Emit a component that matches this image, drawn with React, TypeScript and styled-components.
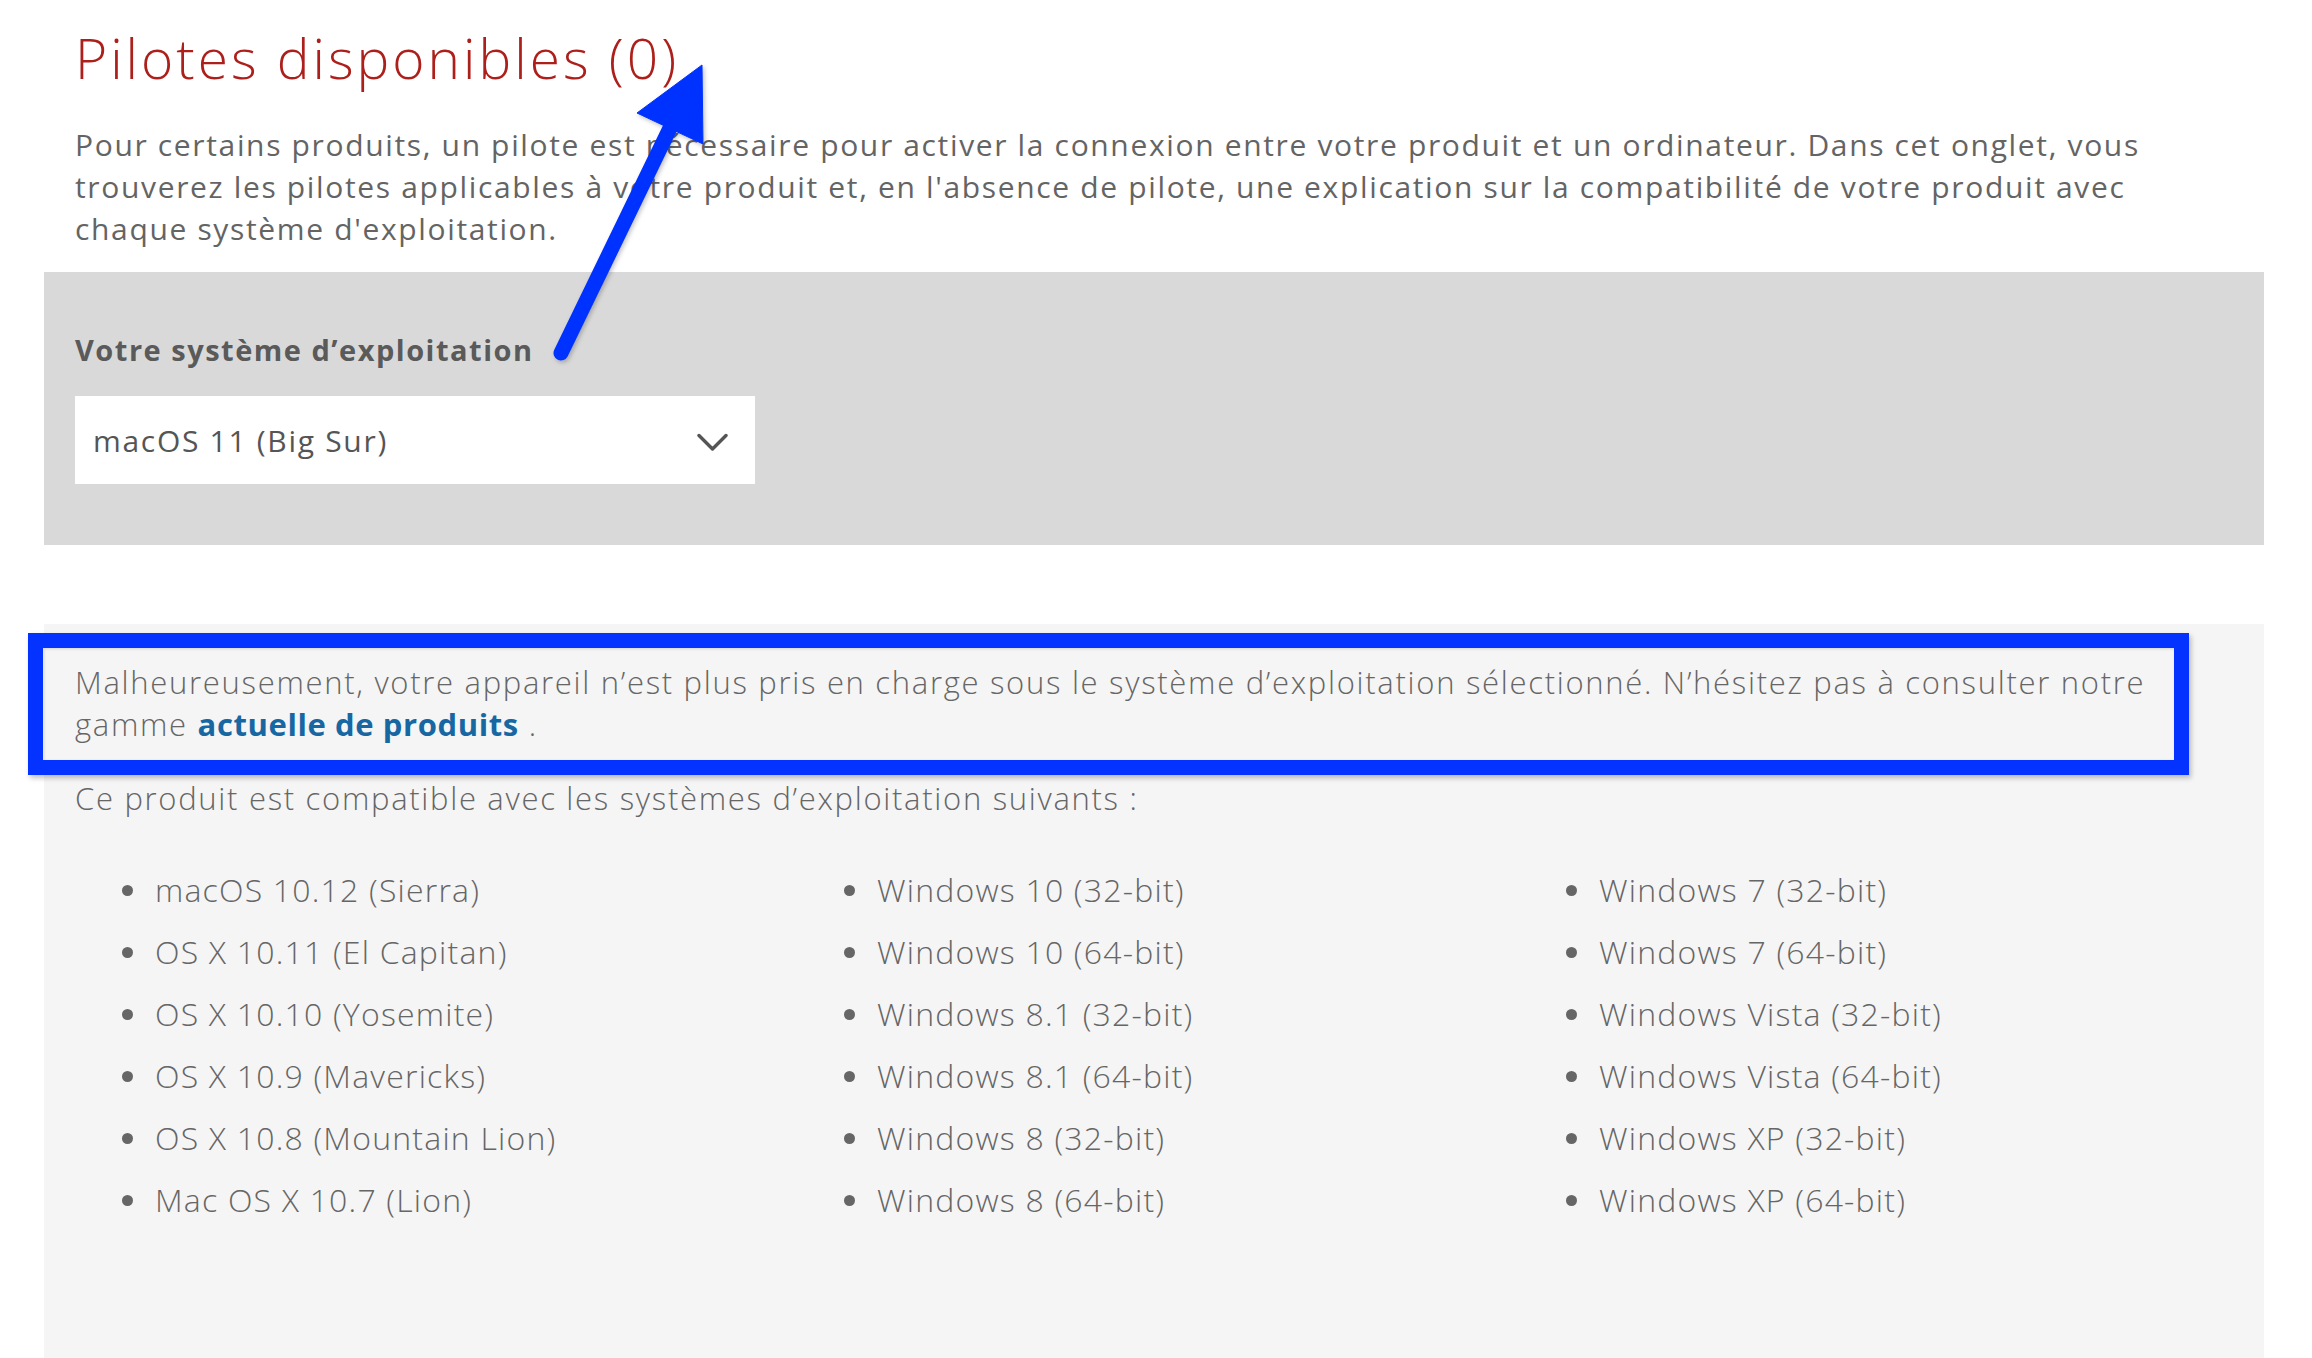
import React from "react";
import styled, { createGlobalStyle } from "styled-components";

const GlobalStyle = createGlobalStyle`
  html, body, #root {
    margin: 0;
    padding: 0;
    height: 100%;
    background: #ffffff;
  }
  body {
    font-family: "Open Sans", "Liberation Sans", sans-serif;
    color: #666666;
  }
  * { box-sizing: border-box; }
`;

const Page = styled.div`
  position: relative;
  min-height: 100%;
  display: flex;
  flex-direction: column;
  padding: 27px 48px 0 44px;
`;

const Intro = styled.header`
  padding: 0 31px;
`;

const Title = styled.h1`
  margin: 0;
  font-size: 55px;
  line-height: 62px;
  font-weight: 300;
  color: #ad1f1b;
  letter-spacing: 3px;
  white-space: nowrap;
`;

const Lead = styled.p`
  margin: 35px 0 0;
  font-size: 30px;
  line-height: 42px;
  color: #646464;
  white-space: nowrap;
  letter-spacing: 1.65px;
`;

const OsPanel = styled.section`
  margin-top: 22px;
  background: #d9d9d9;
  padding: 57px 31px 61px;
`;

const FieldLabel = styled.label`
  display: block;
  font-size: 29px;
  line-height: 42px;
  font-weight: 700;
  color: #5a5a5a;
  letter-spacing: 1.5px;
`;

const SelectBox = styled.div`
  margin-top: 25px;
  width: 680px;
  height: 88px;
  background: #ffffff;
  display: flex;
  align-items: center;
  justify-content: space-between;
  padding: 0 27px 0 18px;
  font-size: 30px;
  color: #555555;
  letter-spacing: 1.7px;
`;

const Chevron = styled.svg`
  width: 31px;
  height: 19px;
  margin-top: 4px;
`;

const Support = styled.section`
  position: relative;
  flex: 1;
  margin-top: 79px;
  background: #f5f5f5;
  padding: 37px 31px 60px;
`;

const Notice = styled.p`
  margin: 0;
  font-size: 31px;
  line-height: 42px;
  font-weight: 300;
  color: #666666;
  white-space: nowrap;
  letter-spacing: 1.7px;
`;

const ProductLink = styled.a`
  color: #1767a3;
  font-weight: 700;
  text-decoration: none;
  letter-spacing: 0.6px;
`;

const Compat = styled.p`
  margin: 32px 0 0;
  font-size: 31px;
  line-height: 42px;
  font-weight: 300;
  color: #666666;
  letter-spacing: 1.7px;
  white-space: nowrap;
`;

const Columns = styled.div`
  margin-top: 50px;
  display: grid;
  grid-template-columns: repeat(3, 722px);
`;

const OsList = styled.ul`
  list-style: none;
  margin: 0;
  padding: 0;
  display: flex;
  flex-direction: column;
  gap: 20px;
`;

const OsItem = styled.li`
  position: relative;
  padding-left: 80px;
  font-size: 32px;
  line-height: 42px;
  font-weight: 300;
  color: #666666;
  letter-spacing: 1.2px;
  white-space: nowrap;

  &::before {
    content: "";
    position: absolute;
    left: 47px;
    top: 16px;
    width: 11px;
    height: 11px;
    border-radius: 50%;
    background: #666666;
  }
`;

const Highlight = styled.div`
  position: absolute;
  left: -16px;
  top: 9px;
  width: 2161px;
  height: 142px;
  border: 15px solid #0433ff;
  box-shadow: 2px 3px 5px rgba(0, 0, 0, 0.25), inset 1px 1px 3px rgba(0, 0, 0, 0.15);
  pointer-events: none;
`;

const ArrowLayer = styled.svg`
  position: absolute;
  left: 0;
  top: 0;
  width: 900px;
  height: 420px;
  pointer-events: none;
  overflow: visible;
`;

const macs = [
  "macOS 10.12 (Sierra)",
  "OS X 10.11 (El Capitan)",
  "OS X 10.10 (Yosemite)",
  "OS X 10.9 (Mavericks)",
  "OS X 10.8 (Mountain Lion)",
  "Mac OS X 10.7 (Lion)",
];
const win10 = [
  "Windows 10 (32-bit)",
  "Windows 10 (64-bit)",
  "Windows 8.1 (32-bit)",
  "Windows 8.1 (64-bit)",
  "Windows 8 (32-bit)",
  "Windows 8 (64-bit)",
];
const winOld = [
  "Windows 7 (32-bit)",
  "Windows 7 (64-bit)",
  "Windows Vista (32-bit)",
  "Windows Vista (64-bit)",
  "Windows XP (32-bit)",
  "Windows XP (64-bit)",
];

export default function App() {
  return (
    <>
      <GlobalStyle />
      <Page>
        <Intro>
          <Title>Pilotes disponibles (0)</Title>
          <Lead>
            Pour certains produits, un pilote est nécessaire pour activer la connexion entre votre produit et un ordinateur. Dans cet onglet, vous
            <br />
            trouverez les pilotes applicables à votre produit et, en l'absence de pilote, une explication sur la compatibilité de votre produit avec
            <br />
            chaque système d'exploitation.
          </Lead>
        </Intro>

        <OsPanel>
          <FieldLabel>Votre système d’exploitation</FieldLabel>
          <SelectBox>
            <span>macOS 11 (Big Sur)</span>
            <Chevron viewBox="0 0 31 19" fill="none">
              <path d="M2 2.5 L15.5 16 L29 2.5" stroke="#555555" strokeWidth="3.4" strokeLinecap="round" strokeLinejoin="round" />
            </Chevron>
          </SelectBox>
        </OsPanel>

        <Support>
          <Notice>
            Malheureusement, votre appareil n’est plus pris en charge sous le système d’exploitation sélectionné. N’hésitez pas à consulter notre
            <br />
            gamme <ProductLink href="#">actuelle de produits</ProductLink> .
          </Notice>
          <Compat>Ce produit est compatible avec les systèmes d’exploitation suivants :</Compat>
          <Columns>
            {[macs, win10, winOld].map((col, i) => (
              <OsList key={i}>
                {col.map((os) => (
                  <OsItem key={os}>{os}</OsItem>
                ))}
              </OsList>
            ))}
          </Columns>
          <Highlight />
        </Support>

        <ArrowLayer viewBox="0 0 900 420">
          <defs>
            <filter id="arrowShadow" x="-20%" y="-20%" width="140%" height="140%">
              <feDropShadow dx="1.5" dy="2" stdDeviation="2" floodColor="#000" floodOpacity="0.25" />
            </filter>
          </defs>
          <g filter="url(#arrowShadow)" fill="#0433ff" stroke="#0433ff">
            <line x1="561" y1="353" x2="672" y2="124" strokeWidth="15" strokeLinecap="round" />
            <polygon points="702,65 637,113 703,144" strokeWidth="1" strokeLinejoin="round" />
          </g>
        </ArrowLayer>
      </Page>
    </>
  );
}
